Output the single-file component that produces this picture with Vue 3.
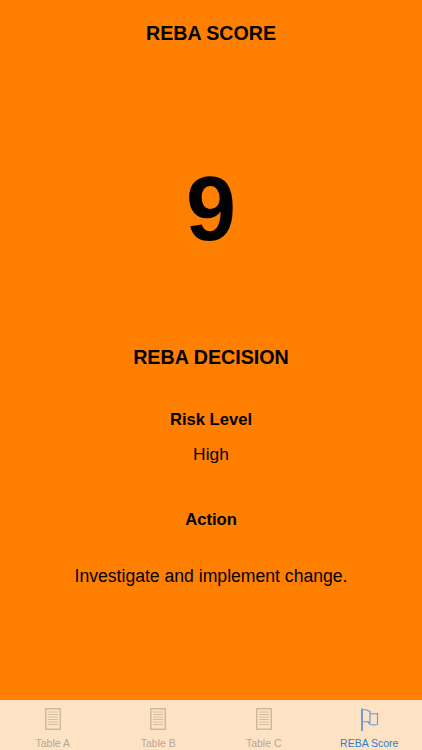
<template>
  <div class="screen">
    <main class="content">
      <h1 class="score-title">REBA SCORE</h1>
      <div class="score">{{ score }}</div>
      <h2 class="decision-title">REBA DECISION</h2>
      <h3 class="risk-label">Risk Level</h3>
      <p class="risk-value">High</p>
      <h3 class="action-label">Action</h3>
      <p class="action-value">Investigate and implement change.</p>
    </main>

    <nav class="tabbar">
      <div v-for="tab in tabs" :key="tab.label" class="tab" :class="{ active: tab.active }">
        <svg v-if="tab.active" class="icon" width="20" height="26" viewBox="0 0 20 26" fill="none">
          <path d="M3 1.500V24" stroke="#6f9fd0" stroke-width="2" />
          <path d="M3.500 2.500C6 2.500 9 3 11 4.500V15.500C9 14.500 6.500 14.500 3.500 15" stroke="#6f9fd0" stroke-width="1.200" />
          <path d="M11 6.500C13.500 7 16 7 18.500 6.500V17.500C16 18 13 18 11 17.500C10 17 9.500 16 9.500 14.800" stroke="#6f9fd0" stroke-width="1.200" />
        </svg>
        <svg v-else class="icon" width="16" height="22" viewBox="0 0 16 22" fill="none">
          <rect x="0.750" y="0.750" width="14.500" height="20.500" stroke="#cfb89e" stroke-width="1.500" />
          <path d="M3 4H13M3 6.500H13M3 9H13M3 11.500H13M3 14H13M3 16.500H13" stroke="#d3bea5" stroke-width="1" />
        </svg>
        <span class="tab-label">{{ tab.label }}</span>
      </div>
    </nav>
  </div>
</template>

<script setup>
const score = 9

const tabs = [
  { label: 'Table A' },
  { label: 'Table B' },
  { label: 'Table C' },
  { label: 'REBA Score', active: true },
]
</script>

<style>
html, body {
  margin: 0;
  padding: 0;
}
</style>

<style scoped>
.screen {
  width: 422px;
  height: 750px;
  display: flex;
  flex-direction: column;
  background-color: #ff8000;
  font-family: 'Liberation Sans', Arial, sans-serif;
  color: #000;
  overflow: hidden;
}

.content {
  flex: 1;
  display: flex;
  flex-direction: column;
  align-items: center;
  text-align: center;
  padding-top: 21px;
}

h1, h2, h3, p {
  margin: 0;
}

.score-title {
  font-size: 19.6px;
  line-height: 24px;
  font-weight: bold;
}

.score {
  margin-top: 110px;
  font-size: 90px;
  line-height: 108px;
  font-weight: bold;
}

.decision-title {
  margin-top: 82px;
  font-size: 19.7px;
  line-height: 24px;
  font-weight: bold;
}

.risk-label {
  margin-top: 41px;
  font-size: 16.6px;
  line-height: 20px;
  font-weight: bold;
}

.risk-value {
  margin-top: 14px;
  font-size: 17.4px;
  line-height: 20px;
}

.action-label {
  margin-top: 46px;
  font-size: 16.6px;
  line-height: 20px;
  font-weight: bold;
}

.action-value {
  margin-top: 36px;
  font-size: 17.6px;
  line-height: 20px;
}

.tabbar {
  height: 50px;
  display: grid;
  grid-template-columns: repeat(4, 1fr);
  background-color: #fde3c3;
}

.tab {
  position: relative;
  display: flex;
  flex-direction: column;
  align-items: center;
  color: #b5a797;
}

.tab.active {
  color: #2f7fd6;
}

.icon {
  margin-top: 8px;
}

.tab.active .icon {
  margin-top: 7px;
}

.tab-label {
  position: absolute;
  bottom: 0;
  font-size: 10.5px;
  line-height: 13px;
}
</style>
